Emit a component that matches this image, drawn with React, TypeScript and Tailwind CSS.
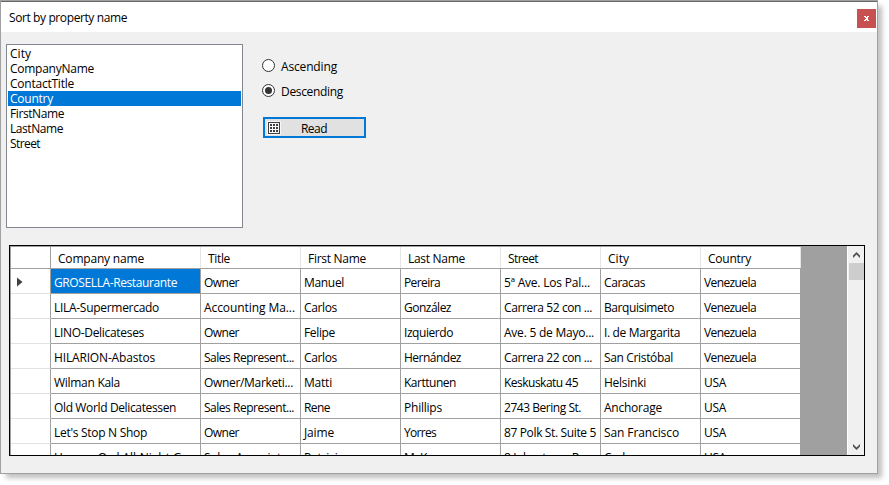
import { useLayoutEffect, useRef } from "react";

const properties: [string, number][] = [
  ["City", 21],
  ["CompanyName", 84],
  ["ContactTitle", 64],
  ["Country", 43],
  ["FirstName", 54],
  ["LastName", 53],
  ["Street", 30],
];

const columns: [string, number][] = [
  ["Company name", 86],
  ["Title", 22],
  ["First Name", 58],
  ["Last Name", 57],
  ["Street", 30],
  ["City", 21],
  ["Country", 43],
];

const rows: [string, number][][] = [
  [["GROSELLA-Restaurante", 123], ["Owner", 35], ["Manuel", 40], ["Pereira", 36], ["5ª Ave. Los Pal...", 86], ["Caracas", 41], ["Venezuela", 52]],
  [["LILA-Supermercado", 105], ["Accounting Ma...", 91], ["Carlos", 33], ["González", 47], ["Carrera 52 con ...", 88], ["Barquisimeto", 70], ["Venezuela", 52]],
  [["LINO-Delicateses", 90], ["Owner", 35], ["Felipe", 31], ["Izquierdo", 49], ["Ave. 5 de Mayo...", 90], ["I. de Margarita", 76], ["Venezuela", 52]],
  [["HILARION-Abastos", 101], ["Sales Represent...", 90], ["Carlos", 33], ["Hernández", 57], ["Carrera 22 con ...", 88], ["San Cristóbal", 69], ["Venezuela", 52]],
  [["Wilman Kala", 66], ["Owner/Marketi...", 89], ["Matti", 28], ["Karttunen", 52], ["Keskuskatu 45", 74], ["Helsinki", 42], ["USA", 22]],
  [["Old World Delicatessen", 122], ["Sales Represent...", 90], ["Rene", 26], ["Phillips", 38], ["2743 Bering St.", 77], ["Anchorage", 58], ["USA", 22]],
  [["Let's Stop N Shop", 93], ["Owner", 35], ["Jaime", 30], ["Yorres", 32], ["87 Polk St. Suite 5", 92], ["San Francisco", 75], ["USA", 22]],
  [["Hungry Owl All-Night G...", 137], ["Sales Associate", 84], ["Patricia", 40], ["McKenna", 50], ["8 Johnstown Ro...", 90], ["Cork", 24], ["USA", 22]],
];

/* A label whose tracking is adjusted so it fills its measured width. */
function Label({ text, width }: { text: string; width: number }) {
  const ref = useRef<HTMLSpanElement>(null);
  useLayoutEffect(() => {
    const el = ref.current;
    if (!el) return;
    const fit = () => {
      el.style.letterSpacing = "0px";
      const natural = el.getBoundingClientRect().width;
      el.style.letterSpacing = `${(width - natural) / text.length}px`;
    };
    fit();
    document.fonts.ready.then(fit);
  }, [text, width]);
  return (
    <span ref={ref} className="block w-max whitespace-nowrap">
      {text}
    </span>
  );
}

function Radio({ text, width, checked }: { text: string; width: number; checked?: boolean }) {
  return (
    <div className="flex h-[25px] items-center gap-[6px]">
      <span className="flex size-[13px] items-center justify-center rounded-full border border-[#333333] bg-white">
        {checked && <span className="size-[7px] rounded-full bg-[#333333]" />}
      </span>
      <div className="pt-[2px]">
        <Label text={text} width={width} />
      </div>
    </div>
  );
}

function GridIcon() {
  return (
    <svg width="14" height="14" viewBox="0 0 14 14" shapeRendering="crispEdges">
      <rect width="14" height="14" fill="#f7f7f7" />
      <rect x="1.5" y="1.5" width="11" height="11" fill="#fafafa" stroke="#404040" />
      {[3, 6, 9].map((y) =>
        [3, 6, 9].map((x) => <rect key={`${x}-${y}`} x={x} y={y} width="2" height="2" fill="#404040" />),
      )}
    </svg>
  );
}

function Arrow({ down }: { down?: boolean }) {
  return (
    <svg width="15" height="17" viewBox="0 0 15 17">
      <path
        d={down ? "M4 6v2.6l3.5 3.5 3.5-3.5V6L7.5 9.4z" : "M4 12V9.4l3.5-3.5 3.5 3.5V12L7.5 8.6z"}
        fill="#505050"
      />
    </svg>
  );
}

const tracks = "grid grid-cols-[40px_150px_repeat(6,100px)]";

export default function App() {
  return (
    <div className="h-[485px] w-[889px] overflow-hidden bg-white font-['Open_Sans','Noto_Sans',sans-serif] text-[12px] leading-[15px] text-black">
      <div className="flex h-[474px] w-[878px] flex-col border border-[#a0a0a0] bg-[#f0f0f0] shadow-[5px_5px_5px_-1px_rgba(0,0,0,0.25)]">
        <header className="flex h-[31px] shrink-0 items-start justify-between border-t border-[#696969] bg-white pr-[1px] pl-[8px]">
          <div className="pt-[8px]">
            <Label text="Sort by property name" width={118} />
          </div>
          <button className="mt-[7px] flex h-[19px] w-[19px] items-center justify-center bg-[#c75050]">
            <svg width="5" height="5" viewBox="0 0 5 5" shapeRendering="crispEdges">
              <path d="M0 0h2v1H0zM3 0h2v1H3zM1 1h3v1H1zM1.5 2h2v1h-2zM1 3h3v1H1zM0 4h2v1H0zM3 4h2v1H3z" fill="#fff" />
            </svg>
          </button>
        </header>

        <section className="flex shrink-0 gap-[19px] pt-[12px] pl-[5px]">
          <ul className="h-[184px] w-[237px] border border-[#828790] bg-white p-[1px]">
            {properties.map(([name, width]) => (
              <li
                key={name}
                className={name === "Country" ? "h-[15px] bg-[#0078d7] pt-[1px] pl-[2px] leading-[14px] text-white" : "h-[15px] pt-[1px] pl-[2px] leading-[14px]"}
              >
                <Label text={name} width={width} />
              </li>
            ))}
          </ul>
          <div className="pt-[9px]">
            <Radio text="Ascending" width={56} />
            <Radio text="Descending" width={62} checked />
            <button className="mt-[14px] ml-[1px] flex h-[21px] w-[103px] items-center border-2 border-[#0078d7] bg-[#e1e1e1] pl-[2px]">
              <GridIcon />
              <span className="ml-[20px] flex pt-[1px]">
                <Label text="Read" width={26} />
              </span>
            </button>
          </div>
        </section>

        <section className="mt-[17px] ml-[8px] flex h-[211px] w-[856px] shrink-0 border border-black bg-[#a0a0a0]">
          <div className="h-[209px] w-[791px] overflow-hidden border-l border-[#a0a0a0]">
            <div className={`${tracks} h-[23px] border-t border-b border-[#a0a0a0] bg-white`}>
              <div className="border-r border-[#a0a0a0]" />
              {columns.map(([name, width]) => (
                <div key={name} className="border-r border-[#e5e5e5] pt-[4px] pl-[7px]">
                  <Label text={name} width={width} />
                </div>
              ))}
            </div>
            {rows.map((row, r) => (
              <div key={r} className={`${tracks} h-[25px] bg-white`}>
                <div className="flex items-center border-r border-b border-r-[#a0a0a0] border-b-[#e2e2e2] pt-[1px] pl-[6px]">
                  {r === 0 && (
                    <svg width="6" height="10" viewBox="0 0 6 10">
                      <path d="M0 .5 5.5 5 0 9.5z" fill="#404040" />
                    </svg>
                  )}
                </div>
                {row.map(([text, width], c) => (
                  <div
                    key={c}
                    className={
                      r === 0 && c === 0
                        ? "border-r border-b border-[#a0a0a0] bg-[#0078d7] pt-[6px] pl-[3px] text-white"
                        : "border-r border-b border-[#a0a0a0] pt-[6px] pl-[3px]"
                    }
                  >
                    <Label text={text} width={width} />
                  </div>
                ))}
              </div>
            ))}
          </div>
          <div className="ml-auto flex h-[209px] w-[17px] flex-col items-center border-l border-white bg-[#f0f0f0]">
            <Arrow />
            <div className="h-[17px] w-[15px] bg-[#cdcdcd]" />
            <div className="mt-auto h-[17px]">
              <Arrow down />
            </div>
          </div>
        </section>
      </div>
    </div>
  );
}
